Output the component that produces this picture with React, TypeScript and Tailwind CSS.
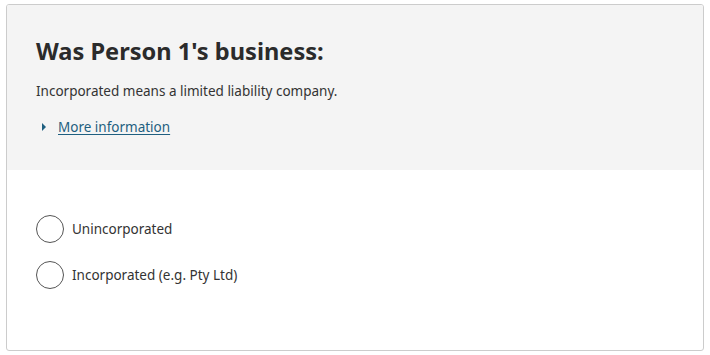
import React, { useState } from 'react';

const options = ['Unincorporated', 'Incorporated (e.g. Pty Ltd)'];

const App: React.FC = () => {
  const [selected, setSelected] = useState<string | null>(null);
  const [open, setOpen] = useState(false);

  return (
    <div className="w-[710px] h-[355px] bg-white pt-[4px] pl-[6px] font-['Noto_Sans',sans-serif] text-[#333]">
      <div className="w-[698px] h-[347px] border border-[#cccccc] rounded-[3px] overflow-hidden">
        <div className="h-[165px] bg-[#f4f4f4] pl-[29px] pt-[30px]">
          <h2 className="text-[23.6px] leading-[32px] font-bold text-[#2b2b2b]">Was Person 1's business:</h2>
          <p className="mt-[14px] text-[13.5px] leading-[20px]">Incorporated means a limited liability company.</p>
          <button
            onClick={() => setOpen(!open)}
            className="mt-[16px] flex items-center text-[13.5px] leading-[20px] text-[#1f5f80]"
          >
            <span className="ml-[6px] mr-[12px] w-0 h-0 border-y-[4px] border-y-transparent border-l-[4px] border-l-[#1f5f80]"></span>
            <span className="underline underline-offset-2">More information</span>
          </button>
        </div>
        <div className="pl-[29px] pt-[45px] flex flex-col gap-[18px]">
          {options.map((opt) => (
            <label key={opt} className="flex items-center gap-[8px] cursor-pointer" onClick={() => setSelected(opt)}>
              <span className="w-[28px] h-[28px] rounded-full border border-[#555] bg-white flex items-center justify-center">
                {selected === opt && <span className="w-[14px] h-[14px] rounded-full bg-[#333]"></span>}
              </span>
              <span className="text-[13.5px] leading-[20px]">{opt}</span>
            </label>
          ))}
        </div>
      </div>
    </div>
  );
};

export default App;
